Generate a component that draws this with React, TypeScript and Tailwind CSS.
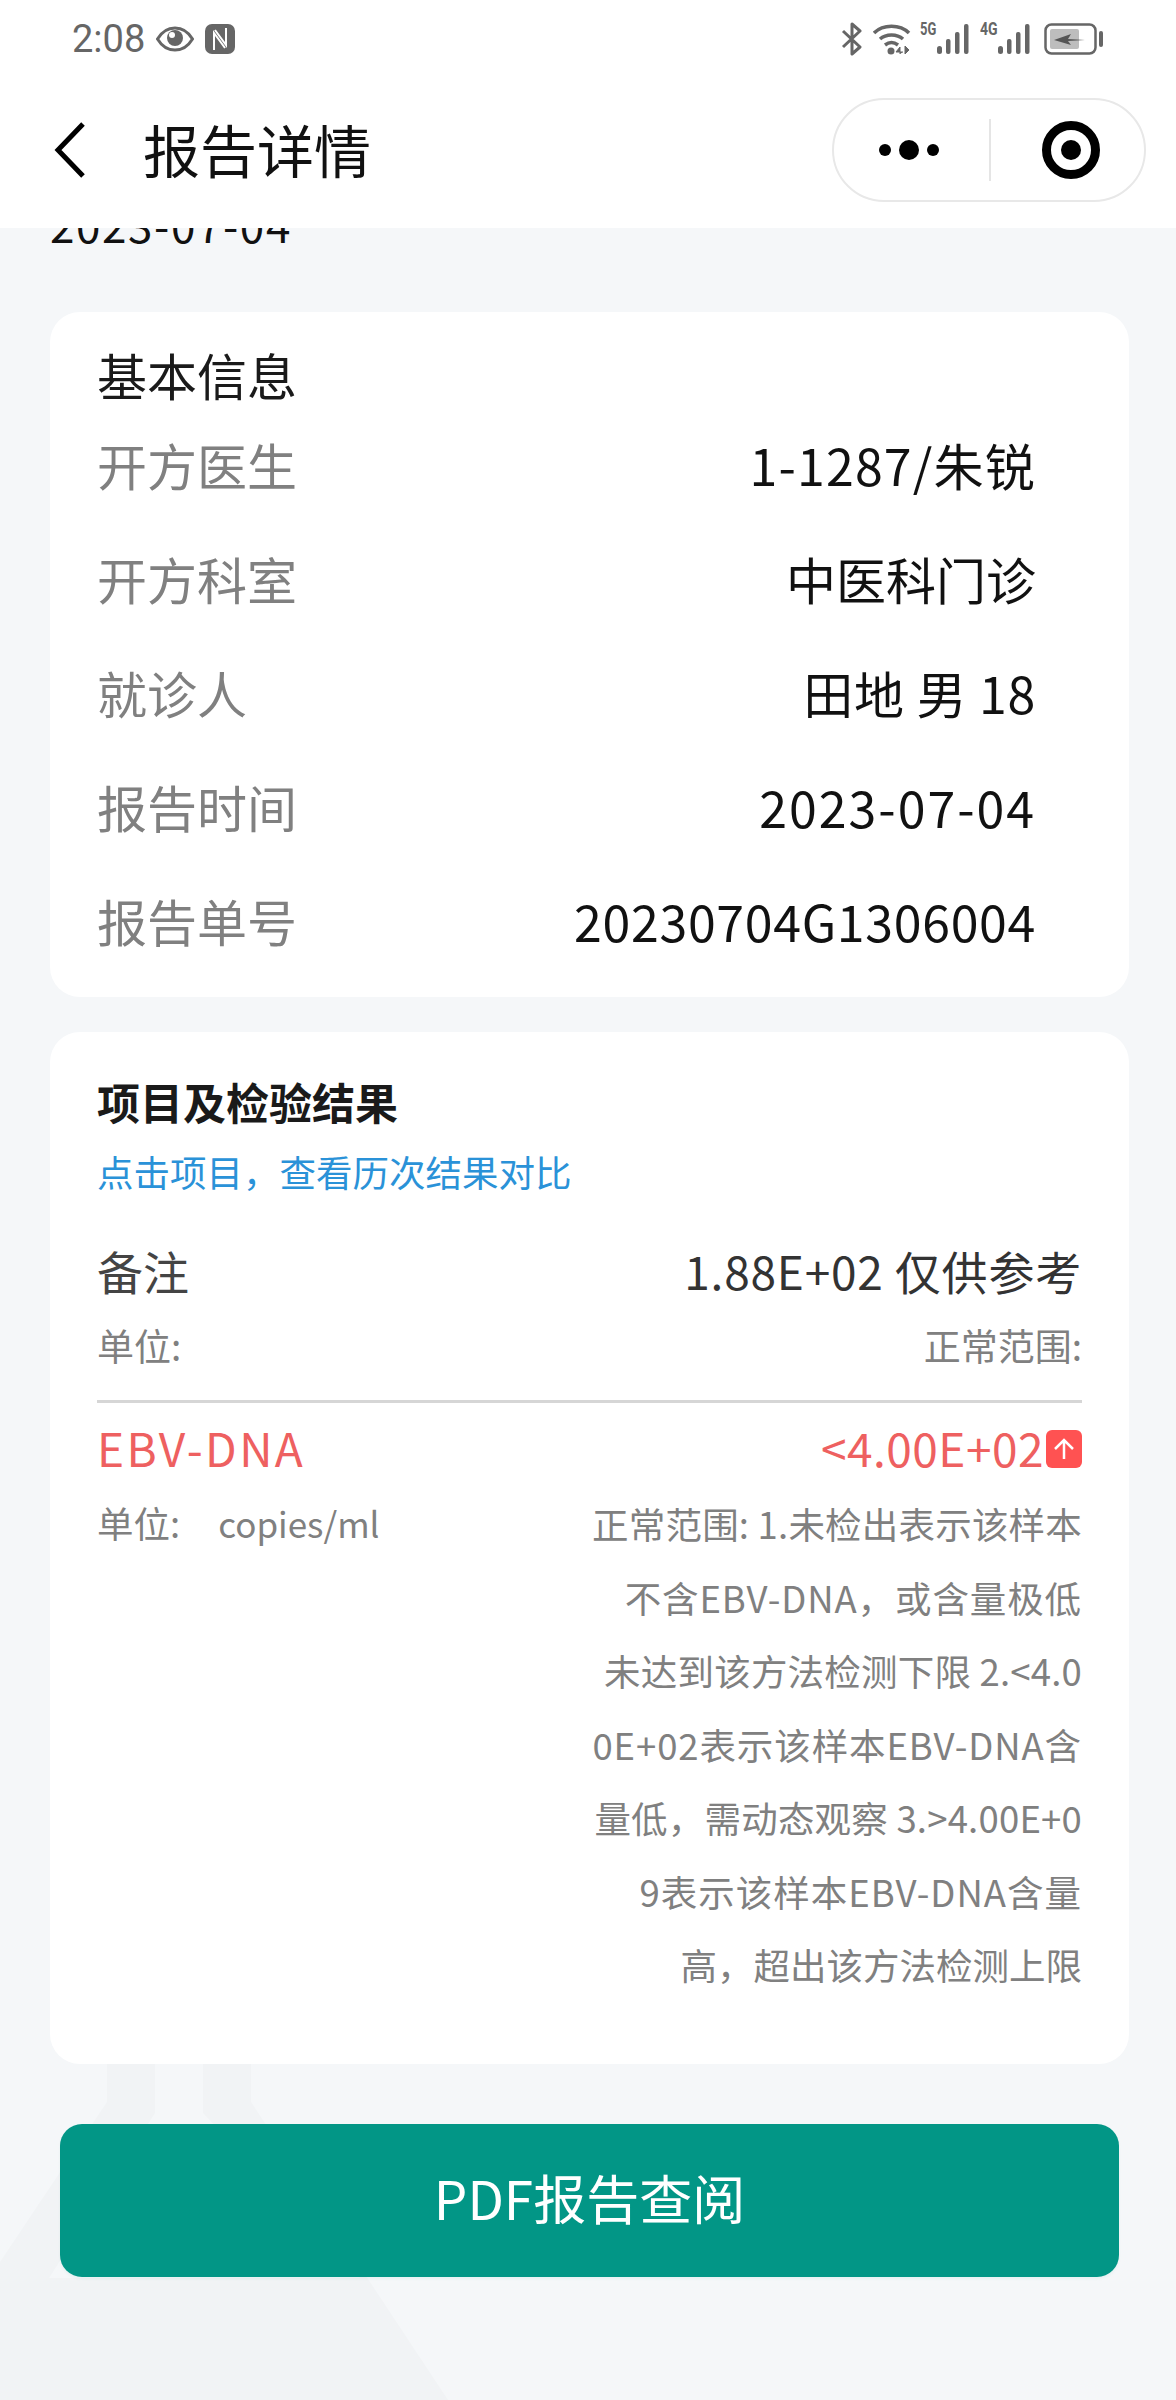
import React from "react";

const font = { fontFamily: '"Noto Sans CJK SC", sans-serif' };

function Eye() {
  return (
    <svg width="38" height="26" viewBox="0 0 38 26" className="ml-[11px]">
      <path d="M1.500 13C6 5.500 12 2 19 2s13 3.500 17.500 11C32 20.500 26 24 19 24S6 20.500 1.500 13Z" fill="none" stroke="#666" strokeWidth="3" />
      <circle cx="19" cy="12" r="8" fill="#666" />
      <circle cx="16" cy="9" r="3" fill="#fff" />
    </svg>
  );
}
function Nfc() {
  return (
    <svg width="30" height="30" viewBox="0 0 30 30" className="ml-[11px]">
      <rect width="30" height="30" rx="7" fill="#666" />
      <path d="M9 26V9l11 15M21 4v17L10 6" fill="none" stroke="#fff" strokeWidth="2" />
    </svg>
  );
}
function Bars() {
  return (
    <svg width="33" height="32" viewBox="0 0 33 32">
      <rect x="0" y="23" width="5" height="8" rx="2.500" fill="#666" />
      <rect x="9" y="16" width="4.500" height="15" rx="2" fill="#666" />
      <rect x="18" y="9" width="4.500" height="22" rx="2" fill="#666" />
      <rect x="27" y="1" width="4.500" height="30" rx="2" fill="#666" />
    </svg>
  );
}
function StatusIcons() {
  return (
    <div className="flex items-center">
      <svg width="22" height="34" viewBox="0 0 22 34">
        <path d="M2 9l17 16-8 7V2l8 7L2 25" fill="none" stroke="#666" strokeWidth="3" strokeLinejoin="round" />
      </svg>
      <svg width="38" height="32" viewBox="0 0 38 32" className="ml-[10px]">
        <path d="M1 10C10 1 27 1 36 10M7 16c6-5.500 17-5.500 23 0M12 22c4-3 9-3 13 0" fill="none" stroke="#666" strokeWidth="3.500" />
        <circle cx="18" cy="28" r="3.500" fill="#666" />
        <path d="M27 31V24l-4 5h7M32 23l4 4-4 4Z" fill="#666" stroke="#666" strokeWidth="1" />
      </svg>
      <div className="ml-[9px] flex items-start">
        <span className="mt-[-3px] w-[17px] self-start text-[18px] leading-[18px] font-bold text-[#666]" style={{ fontFamily: "Roboto, sans-serif", transform: "scaleX(0.72)", transformOrigin: "left" }}>5G</span>
        <Bars />
      </div>
      <div className="ml-[10px] flex items-start">
        <span className="mt-[-3px] w-[18px] self-start text-[18px] leading-[18px] font-bold text-[#666]" style={{ fontFamily: "Roboto, sans-serif", transform: "scaleX(0.78)", transformOrigin: "left" }}>4G</span>
        <Bars />
      </div>
      <svg width="59" height="32" viewBox="0 0 59 32" className="ml-[13px]">
        <rect x="1.500" y="1.500" width="50" height="29" rx="6" fill="none" stroke="#666" strokeWidth="2.500" />
        <rect x="6" y="6" width="29" height="20" rx="2" fill="#bdbdbd" />
        <path d="M10 17l17-6-3 5 17 1-17 1 3 4Z" fill="#555" />
        <rect x="55" y="8" width="4" height="16" rx="2" fill="#666" />
      </svg>
    </div>
  );
}

function Header() {
  return (
    <div className="relative z-10 h-[228px] bg-white">
      <div className="flex h-[76px] items-center justify-between pl-[72px] pr-[73px] pt-[2px]">
        <div className="flex items-center">
          <span className="text-[38px] leading-[36px] text-[#666]" style={{ fontFamily: "Roboto, sans-serif" }}>2:08</span>
          <Eye />
          <Nfc />
        </div>
        <StatusIcons />
      </div>
      <div className="flex items-center justify-between pl-[52px] pr-[30px] pt-[22px]">
        <div className="flex items-center">
          <svg width="36" height="58" viewBox="0 0 36 58">
            <path d="M31 3L6 29l25 26" fill="none" stroke="#000" strokeWidth="5" />
          </svg>
          <span className="ml-[55px] mt-[-5px] text-[57px] leading-[64px] text-[#111]">报告详情</span>
        </div>
        <div className="flex h-[104px] w-[314px] items-center rounded-[52px] border-2 border-[#e8e8e8] bg-white">
          <div className="flex w-[155px] items-center justify-center gap-[8px] pr-[5px]">
            <span className="h-[12px] w-[12px] rounded-full bg-black" />
            <span className="h-[20px] w-[20px] rounded-full bg-black" />
            <span className="h-[12px] w-[12px] rounded-full bg-black" />
          </div>
          <div className="h-[62px] w-[2px] bg-[#e5e5e5]" />
          <div className="flex flex-1 items-center justify-center pl-[7px]">
            <div className="flex h-[58px] w-[58px] items-center justify-center rounded-full border-[9px] border-black">
              <span className="h-[20px] w-[20px] rounded-full bg-black" />
            </div>
          </div>
        </div>
      </div>
    </div>
  );
}

const rows = [
  { k: "开方医生", v: "1-1287/朱锐", t: "tracking-[1.2px]" },
  { k: "开方科室", v: "中医科门诊", t: "tracking-[0px]" },
  { k: "就诊人", v: "田地 男 18", t: "tracking-[0.7px]" },
  { k: "报告时间", v: "2023-07-04", t: "tracking-[2px]" },
  { k: "报告单号", v: "20230704G1306004", t: "tracking-[0.7px]" },
];

const rangeLines = [
  { l: "正常范围: 1.未检出表示该样本", t: "tracking-[0.2px]" },
  { l: "不含EBV-DNA\uFF0C或含量极低", t: "tracking-[0.9px]" },
  { l: "未达到该方法检测下限 2.<4.0", t: "tracking-[0.2px]" },
  { l: "0E+02表示该样本EBV-DNA含", t: "tracking-[0.9px]" },
  { l: "量低\uFF0C需动态观察 3.>4.00E+0", t: "tracking-[0.2px]" },
  { l: "9表示该样本EBV-DNA含量", t: "tracking-[1px]" },
  { l: "高\uFF0C超出该方法检测上限", t: "tracking-[0px]" },
];

function Background() {
  return (
    <svg className="absolute bottom-0 left-0" width="460" height="336" viewBox="0 0 460 336">
      <path d="M107 0H155V49L49 214H360L203 49V0H251V38L448 336H0V198L107 38Z" fill="#f1f3f5" />
    </svg>
  );
}

export default function App() {
  return (
    <div className="relative flex h-[2400px] w-[1176px] flex-col overflow-hidden bg-[#f5f7f9]" style={font}>
      <Header />
      <Background />
      <div className="relative flex flex-col pl-[50px] pr-[47px]">
        <div className="h-[20px] overflow-hidden">
          <div className="mt-[-28px] text-[44px] leading-[48px] tracking-[1.6px] text-[#111]">2023-07-04</div>
        </div>

        <div className="mt-[64px] flex h-[685px] flex-col rounded-[30px] bg-white pl-[47px] pr-[93px] pt-[29px]">
          <div className="text-[50px] leading-[66px] text-[#1a1a1a]">基本信息</div>
          {rows.map((r) => (
            <div key={r.k} className="flex h-[114px] items-center justify-between first:mt-[-8px]">
              <span className="text-[50px] leading-[60px] text-[#808080]">{r.k}</span>
              <span className={`text-[50px] leading-[60px] text-[#111] ${r.t}`}>{r.v}</span>
            </div>
          ))}
        </div>

        <div className="mt-[35px] flex h-[1032px] flex-col rounded-[30px] bg-white px-[47px] pt-[43px]">
          <div className="text-[43px] font-bold leading-[52px] text-[#1a1a1a]">项目及检验结果</div>
          <div className="mt-[21px] text-[36.5px] leading-[48px] text-[#2a92d8]">点击项目{"\uFF0C"}查看历次结果对比</div>
          <div className="mt-[44px] flex items-center justify-between">
            <span className="text-[46px] leading-[60px] text-[#444]">备注</span>
            <span className="text-[46px] leading-[60px] tracking-[0.8px] text-[#333]">1.88E+02 仅供参考</span>
          </div>
          <div className="mt-[21px] flex items-center justify-between text-[37px] leading-[48px] text-[#808080]">
            <span>单位:</span>
            <span>正常范围:</span>
          </div>
          <div className="mt-[31px] h-[3px] bg-[#d6d6d6]" />
          <div className="mt-[14px] flex items-center justify-between">
            <span className="text-[46px] leading-[60px] tracking-[2.4px] text-[#ee6060]">EBV-DNA</span>
            <span className="flex items-center text-[46px] leading-[60px] tracking-[0.5px] text-[#ee6060]">
              &lt;4.00E+02
              <span className="ml-[2px] mt-[4px] flex h-[38px] w-[36px] items-center justify-center rounded-[6px] bg-[#ff5252]">
                <svg width="24" height="24" viewBox="0 0 24 24">
                  <path d="M12 22V3M3 12l9-9 9 9" fill="none" stroke="#fff" strokeWidth="2.500" />
                </svg>
              </span>
            </span>
          </div>
          <div className="mt-[22px] flex justify-between text-[36.5px] leading-[73.5px] text-[#808080]">
            <div className="flex leading-[48px]">
              <span>单位:</span>
              <span className="ml-[38px] text-[35px]">copies/ml</span>
            </div>
            <div className="mt-[-12px] flex flex-col items-end">
              {rangeLines.map((r) => (
                <div key={r.l} className={`whitespace-nowrap ${r.t}`}>{r.l}</div>
              ))}
            </div>
          </div>
        </div>

        <button className="mx-[10px] mt-[60px] flex h-[153px] items-center justify-center rounded-[22px] bg-[#029686] pb-[5px] text-[53px] text-white shadow-[0_2px_3px_rgba(2,150,134,0.06)]">
          PDF报告查阅
        </button>
      </div>
    </div>
  );
}
